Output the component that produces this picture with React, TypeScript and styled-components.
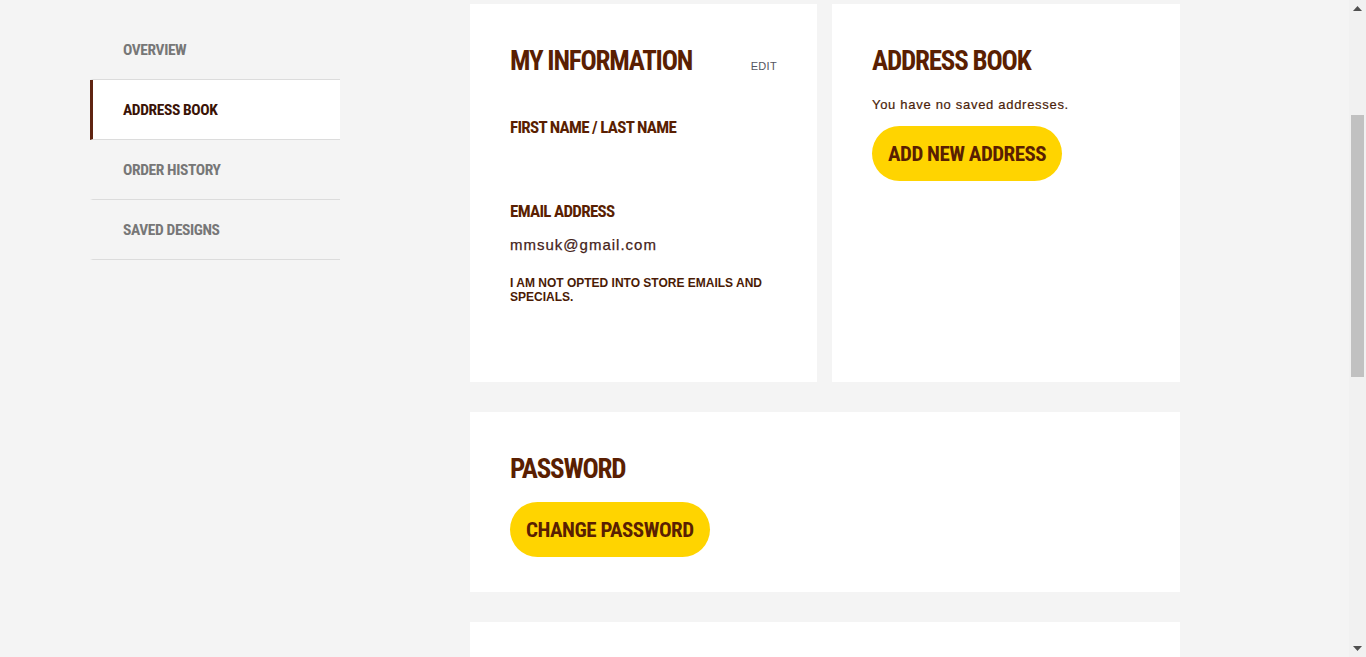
import React from "react";
import styled, { createGlobalStyle } from "styled-components";

const brown = "#5a1f02";
const condensed = `"Roboto Condensed", "DejaVu Sans Condensed", sans-serif`;

const Global = createGlobalStyle`
  html, body { margin: 0; padding: 0; height: 100%; overflow: hidden; background: #f4f4f4; }
  body { font-family: "Liberation Sans", Arial, sans-serif; }
  #root { height: 100%; }
  * { box-sizing: border-box; }
`;

const Page = styled.div`
  display: flex;
  height: 100vh;
  background: #f4f4f4;
`;

const Content = styled.div`
  flex: 1;
  min-width: 0;
  overflow: hidden;
`;

const ScrollBar = styled.div`
  width: 17px;
  flex: none;
  background: #f1f1f1;
  display: flex;
  flex-direction: column;
`;

const ScrollArrow = styled.div`
  height: 17px;
  display: flex;
  align-items: center;
  justify-content: center;
  flex: none;
`;

const Track = styled.div<{ $offset: number }>`
  flex: 1;
  padding: ${(p) => p.$offset}px 2px 0;
`;

const Thumb = styled.div<{ $size: number }>`
  height: ${(p) => p.$size}px;
  background: #c1c1c1;
`;

const Layout = styled.div`
  display: flex;
  align-items: flex-start;
  gap: 130px;
  padding: 4px 0 0 90px;
`;

const Sidebar = styled.nav`
  width: 250px;
  margin-top: 16px;
  display: flex;
  flex-direction: column;
`;

const NavItem = styled.div<{ $active?: boolean }>`
  height: 60px;
  display: flex;
  align-items: center;
  padding-left: 30px;
  border-left: 3px solid ${(p) => (p.$active ? "#5f2411" : "transparent")};
  border-bottom: 1px solid #dcdcdc;
  background: ${(p) => (p.$active ? "#ffffff" : "transparent")};
  font-family: ${condensed};
  font-weight: 700;
  font-size: 15.5px;
  letter-spacing: -0.4px;
  color: ${(p) => (p.$active ? "#3a1306" : "#777777")};
`;

const Main = styled.main`
  width: 710px;
  display: flex;
  flex-direction: column;
  gap: 30px;
`;

const Row = styled.div`
  display: grid;
  grid-template-columns: 347px 348px;
  gap: 15px;
`;

const Card = styled.section<{ $minHeight?: number }>`
  background: #ffffff;
  padding: 40px 40px 35px;
  min-height: ${(p) => (p.$minHeight ? `${p.$minHeight}px` : "auto")};
`;

const CardHead = styled.div`
  display: grid;
  grid-template-columns: 1fr auto;
  align-items: baseline;
`;

const Heading = styled.h2`
  margin: 0;
  font-family: ${condensed};
  font-weight: 700;
  font-size: 27px;
  line-height: 34px;
  letter-spacing: -1.2px;
  white-space: nowrap;
  color: ${brown};
`;

const EditLink = styled.a`
  font-family: "Liberation Sans", Arial, sans-serif;
  font-size: 11px;
  letter-spacing: 0.3px;
  color: #555560;
  text-decoration: none;
`;

const Label = styled.div<{ $gap: number }>`
  margin-top: ${(p) => p.$gap}px;
  font-family: ${condensed};
  font-weight: 700;
  font-size: 17px;
  line-height: 20px;
  letter-spacing: -0.7px;
  white-space: nowrap;
  color: ${brown};
`;

const Value = styled.div`
  margin-top: 14px;
  min-height: 20px;
  font-family: "Liberation Sans", Arial, sans-serif;
  font-size: 15px;
  line-height: 20px;
  letter-spacing: 1px;
  color: #45231a;
  -webkit-text-stroke: 0.25px #45231a;
`;

const OptIn = styled.p`
  margin: 21px 0 0;
  font-family: "Liberation Sans", Arial, sans-serif;
  font-weight: 700;
  font-size: 12px;
  line-height: 14px;
  color: #4a1b05;
`;

const Note = styled.p`
  margin: 18px 0 0;
  font-family: "Liberation Sans", Arial, sans-serif;
  font-size: 13px;
  line-height: 18px;
  letter-spacing: 0.7px;
  color: #4a1e0a;
  -webkit-text-stroke: 0.2px #4a1e0a;
`;

const PillButton = styled.button<{ $gap: number }>`
  margin-top: ${(p) => p.$gap}px;
  height: 55px;
  padding: 0 16px;
  border: none;
  border-radius: 28px;
  background: #ffd400;
  font-family: ${condensed};
  font-weight: 700;
  font-size: 21px;
  letter-spacing: -0.5px;
  white-space: nowrap;
  color: ${brown};
  cursor: pointer;
`;

function ArrowIcon({ down }: { down?: boolean }) {
  return (
    <svg width="9" height="5" viewBox="0 0 9 5">
      <path d={down ? "M0 0H9L4.5 5Z" : "M0 5H9L4.5 0Z"} fill="#505050" />
    </svg>
  );
}

export default function App() {
  return (
    <>
      <Global />
      <Page>
        <Content>
          <Layout>
            <Sidebar>
              <NavItem>OVERVIEW</NavItem>
              <NavItem $active>ADDRESS BOOK</NavItem>
              <NavItem>ORDER HISTORY</NavItem>
              <NavItem>SAVED DESIGNS</NavItem>
            </Sidebar>
            <Main>
              <Row>
                <Card $minHeight={378}>
                  <CardHead>
                    <Heading>MY INFORMATION</Heading>
                    <EditLink href="#">EDIT</EditLink>
                  </CardHead>
                  <Label $gap={39}>FIRST NAME / LAST NAME</Label>
                  <Value />
                  <Label $gap={30}>EMAIL ADDRESS</Label>
                  <Value>mmsuk@gmail.com</Value>
                  <OptIn>I AM NOT OPTED INTO STORE EMAILS AND SPECIALS.</OptIn>
                </Card>
                <Card $minHeight={378}>
                  <Heading>ADDRESS BOOK</Heading>
                  <Note>You have no saved addresses.</Note>
                  <PillButton $gap={12}>ADD NEW ADDRESS</PillButton>
                </Card>
              </Row>
              <Card>
                <Heading>PASSWORD</Heading>
                <PillButton $gap={16}>CHANGE PASSWORD</PillButton>
              </Card>
              <Card $minHeight={300} />
            </Main>
          </Layout>
        </Content>
        <ScrollBar>
          <ScrollArrow>
            <ArrowIcon />
          </ScrollArrow>
          <Track $offset={98}>
            <Thumb $size={262} />
          </Track>
          <ScrollArrow>
            <ArrowIcon down />
          </ScrollArrow>
        </ScrollBar>
      </Page>
    </>
  );
}
